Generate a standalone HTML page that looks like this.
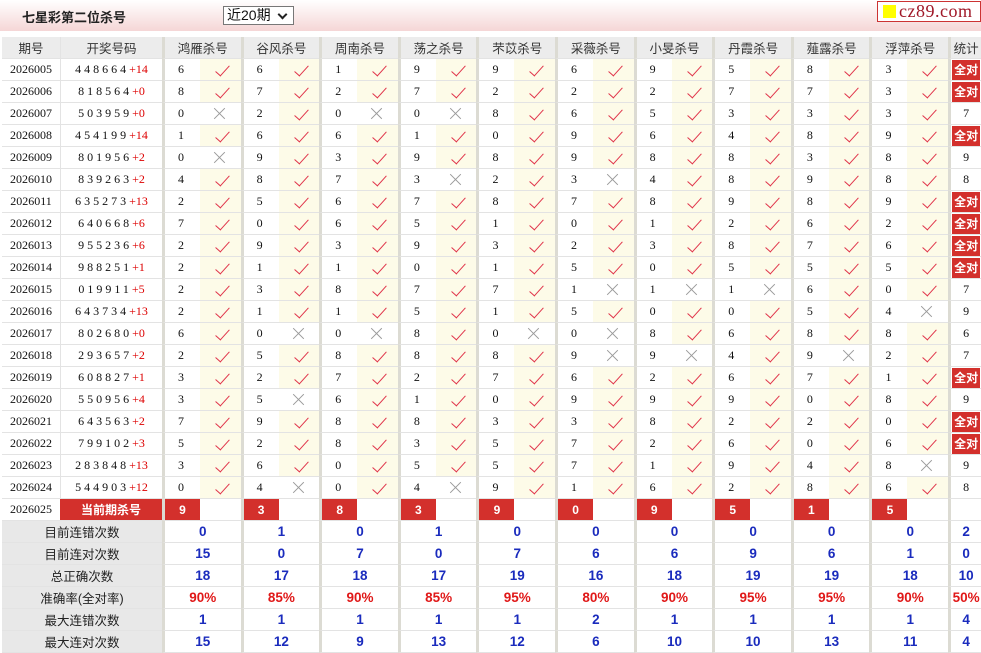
<!DOCTYPE html><html><head><meta charset="utf-8"><style>
*{margin:0;padding:0;box-sizing:border-box}
body{width:981px;height:652px;overflow:hidden;background:#fff;font-family:"Liberation Sans","Noto Sans CJK SC",sans-serif;position:relative}
.top{position:absolute;left:0;top:0;width:981px;height:31px;background:linear-gradient(#fff,#f5d6d6)}
.title{position:absolute;left:22px;top:7px;font-size:13px;font-weight:bold;color:#222}
.sel{position:absolute;left:223px;top:6px;width:71px;height:19px;border:1px solid #777;background:#fff;font-size:14px;padding-left:3px;line-height:17px;color:#111}
.sel:after{content:"";position:absolute;right:7px;top:4px;width:5px;height:5px;border-right:2px solid #222;border-bottom:2px solid #222;transform:rotate(45deg)}
.logo{position:absolute;left:877px;top:1px;width:104px;height:21px;border:1px solid #c33;background:#fff;font-family:"Liberation Serif",serif;font-size:18px;color:#a01828;line-height:18px;padding-left:21px;letter-spacing:.5px}
.logo:before{content:"";position:absolute;left:5px;top:3px;width:13px;height:13px;background:#ff0}
table{position:absolute;left:2px;top:37px;border-collapse:separate;border-spacing:0;table-layout:fixed;width:979px}
td{height:22px;border-bottom:1px solid #e3e3e3;font-size:12px;padding:0;text-align:center;font-family:"Liberation Serif","Noto Serif CJK SC",serif;color:#111;position:relative}
tr.h td{background:#ececec;font-family:"Liberation Sans","Noto Sans CJK SC",sans-serif;font-size:12.5px;color:#333}
td.n{border-left:3px solid #dcdbd3;text-align:left;padding-left:13px}
td.g{border-left:3px solid #dcdbd3}
td.y{background:#fdfbe8}
td.y:after{content:"";position:absolute;left:19px;top:3px;width:6px;height:13px;border-right:1.6px solid #e0344a;border-bottom:1.6px solid #e0344a;transform:rotate(42deg)}
td.x:before,td.x:after{content:"";position:absolute;left:12px;top:10px;width:15px;height:1px;background:#999;transform:rotate(45deg)}
td.x:after{transform:rotate(-45deg)}
td.q{border-left:1px solid #e3e3e3}
td.s{border-left:3px solid #dcdbd3}
td.s b{display:block;background:#d3302c;color:#fff;font-family:"Liberation Sans","Noto Sans CJK SC",sans-serif;font-size:12px;height:20px;line-height:20px;margin:0 1px}
td.k{font-family:"Liberation Serif",serif}
td.r{background:#d3302c;color:#fff;font-weight:bold;text-align:center;border-left:3px solid #dcdbd3;font-family:"Liberation Sans","Noto Sans CJK SC",sans-serif}
td.c{background:#d3302c;color:#fff;font-weight:bold;font-family:"Liberation Sans","Noto Sans CJK SC",sans-serif;font-size:12px}
td.j{letter-spacing:3px}
td.j i{font-style:normal;color:#d00;letter-spacing:0}
tr.t td{font-family:"Liberation Sans",sans-serif;font-weight:bold;font-size:13.5px;color:#1a2bbd}
tr.t td.l{background:#e8e8e8;font-family:"Liberation Sans","Noto Sans CJK SC",sans-serif;font-weight:normal;font-size:12.5px;color:#222}
tr.p td{color:#e01818}
tr.t td.m{border-left:3px solid #dcdbd3}
</style></head><body>
<div class="top"></div>
<div class="title">七星彩第二位杀号</div>
<div class="sel">近20期</div>
<div class="logo">cz89.com</div>
<table>
<colgroup><col style="width:58px"><col style="width:102px">
<col style="width:38px"><col style="width:40.6px"><col style="width:38px"><col style="width:40.6px"><col style="width:38px"><col style="width:40.6px"><col style="width:38px"><col style="width:40.6px"><col style="width:38px"><col style="width:40.6px"><col style="width:38px"><col style="width:40.6px"><col style="width:38px"><col style="width:40.6px"><col style="width:38px"><col style="width:40.6px"><col style="width:38px"><col style="width:40.6px"><col style="width:38px"><col style="width:40.6px"><col style="width:33px"></colgroup>
<tr class="h"><td>期号</td><td class="q">开奖号码</td><td colspan="2" class="g">鸿雁杀号</td><td colspan="2" class="g">谷风杀号</td><td colspan="2" class="g">周南杀号</td><td colspan="2" class="g">荡之杀号</td><td colspan="2" class="g">芣苡杀号</td><td colspan="2" class="g">采薇杀号</td><td colspan="2" class="g">小旻杀号</td><td colspan="2" class="g">丹霞杀号</td><td colspan="2" class="g">薤露杀号</td><td colspan="2" class="g">浮萍杀号</td><td class="g">统计</td></tr>
<tr><td>2026005</td><td class="j q">448664<i>+14</i></td><td class="n">6</td><td class="y"></td><td class="n">6</td><td class="y"></td><td class="n">1</td><td class="y"></td><td class="n">9</td><td class="y"></td><td class="n">9</td><td class="y"></td><td class="n">6</td><td class="y"></td><td class="n">9</td><td class="y"></td><td class="n">5</td><td class="y"></td><td class="n">8</td><td class="y"></td><td class="n">3</td><td class="y"></td><td class="s"><b>全对</b></td></tr>
<tr><td>2026006</td><td class="j q">818564<i>+0</i></td><td class="n">8</td><td class="y"></td><td class="n">7</td><td class="y"></td><td class="n">2</td><td class="y"></td><td class="n">7</td><td class="y"></td><td class="n">2</td><td class="y"></td><td class="n">2</td><td class="y"></td><td class="n">2</td><td class="y"></td><td class="n">7</td><td class="y"></td><td class="n">7</td><td class="y"></td><td class="n">3</td><td class="y"></td><td class="s"><b>全对</b></td></tr>
<tr><td>2026007</td><td class="j q">503959<i>+0</i></td><td class="n">0</td><td class="x"></td><td class="n">2</td><td class="y"></td><td class="n">0</td><td class="x"></td><td class="n">0</td><td class="x"></td><td class="n">8</td><td class="y"></td><td class="n">6</td><td class="y"></td><td class="n">5</td><td class="y"></td><td class="n">3</td><td class="y"></td><td class="n">3</td><td class="y"></td><td class="n">3</td><td class="y"></td><td class="s k">7</td></tr>
<tr><td>2026008</td><td class="j q">454199<i>+14</i></td><td class="n">1</td><td class="y"></td><td class="n">6</td><td class="y"></td><td class="n">6</td><td class="y"></td><td class="n">1</td><td class="y"></td><td class="n">0</td><td class="y"></td><td class="n">9</td><td class="y"></td><td class="n">6</td><td class="y"></td><td class="n">4</td><td class="y"></td><td class="n">8</td><td class="y"></td><td class="n">9</td><td class="y"></td><td class="s"><b>全对</b></td></tr>
<tr><td>2026009</td><td class="j q">801956<i>+2</i></td><td class="n">0</td><td class="x"></td><td class="n">9</td><td class="y"></td><td class="n">3</td><td class="y"></td><td class="n">9</td><td class="y"></td><td class="n">8</td><td class="y"></td><td class="n">9</td><td class="y"></td><td class="n">8</td><td class="y"></td><td class="n">8</td><td class="y"></td><td class="n">3</td><td class="y"></td><td class="n">8</td><td class="y"></td><td class="s k">9</td></tr>
<tr><td>2026010</td><td class="j q">839263<i>+2</i></td><td class="n">4</td><td class="y"></td><td class="n">8</td><td class="y"></td><td class="n">7</td><td class="y"></td><td class="n">3</td><td class="x"></td><td class="n">2</td><td class="y"></td><td class="n">3</td><td class="x"></td><td class="n">4</td><td class="y"></td><td class="n">8</td><td class="y"></td><td class="n">9</td><td class="y"></td><td class="n">8</td><td class="y"></td><td class="s k">8</td></tr>
<tr><td>2026011</td><td class="j q">635273<i>+13</i></td><td class="n">2</td><td class="y"></td><td class="n">5</td><td class="y"></td><td class="n">6</td><td class="y"></td><td class="n">7</td><td class="y"></td><td class="n">8</td><td class="y"></td><td class="n">7</td><td class="y"></td><td class="n">8</td><td class="y"></td><td class="n">9</td><td class="y"></td><td class="n">8</td><td class="y"></td><td class="n">9</td><td class="y"></td><td class="s"><b>全对</b></td></tr>
<tr><td>2026012</td><td class="j q">640668<i>+6</i></td><td class="n">7</td><td class="y"></td><td class="n">0</td><td class="y"></td><td class="n">6</td><td class="y"></td><td class="n">5</td><td class="y"></td><td class="n">1</td><td class="y"></td><td class="n">0</td><td class="y"></td><td class="n">1</td><td class="y"></td><td class="n">2</td><td class="y"></td><td class="n">6</td><td class="y"></td><td class="n">2</td><td class="y"></td><td class="s"><b>全对</b></td></tr>
<tr><td>2026013</td><td class="j q">955236<i>+6</i></td><td class="n">2</td><td class="y"></td><td class="n">9</td><td class="y"></td><td class="n">3</td><td class="y"></td><td class="n">9</td><td class="y"></td><td class="n">3</td><td class="y"></td><td class="n">2</td><td class="y"></td><td class="n">3</td><td class="y"></td><td class="n">8</td><td class="y"></td><td class="n">7</td><td class="y"></td><td class="n">6</td><td class="y"></td><td class="s"><b>全对</b></td></tr>
<tr><td>2026014</td><td class="j q">988251<i>+1</i></td><td class="n">2</td><td class="y"></td><td class="n">1</td><td class="y"></td><td class="n">1</td><td class="y"></td><td class="n">0</td><td class="y"></td><td class="n">1</td><td class="y"></td><td class="n">5</td><td class="y"></td><td class="n">0</td><td class="y"></td><td class="n">5</td><td class="y"></td><td class="n">5</td><td class="y"></td><td class="n">5</td><td class="y"></td><td class="s"><b>全对</b></td></tr>
<tr><td>2026015</td><td class="j q">019911<i>+5</i></td><td class="n">2</td><td class="y"></td><td class="n">3</td><td class="y"></td><td class="n">8</td><td class="y"></td><td class="n">7</td><td class="y"></td><td class="n">7</td><td class="y"></td><td class="n">1</td><td class="x"></td><td class="n">1</td><td class="x"></td><td class="n">1</td><td class="x"></td><td class="n">6</td><td class="y"></td><td class="n">0</td><td class="y"></td><td class="s k">7</td></tr>
<tr><td>2026016</td><td class="j q">643734<i>+13</i></td><td class="n">2</td><td class="y"></td><td class="n">1</td><td class="y"></td><td class="n">1</td><td class="y"></td><td class="n">5</td><td class="y"></td><td class="n">1</td><td class="y"></td><td class="n">5</td><td class="y"></td><td class="n">0</td><td class="y"></td><td class="n">0</td><td class="y"></td><td class="n">5</td><td class="y"></td><td class="n">4</td><td class="x"></td><td class="s k">9</td></tr>
<tr><td>2026017</td><td class="j q">802680<i>+0</i></td><td class="n">6</td><td class="y"></td><td class="n">0</td><td class="x"></td><td class="n">0</td><td class="x"></td><td class="n">8</td><td class="y"></td><td class="n">0</td><td class="x"></td><td class="n">0</td><td class="x"></td><td class="n">8</td><td class="y"></td><td class="n">6</td><td class="y"></td><td class="n">8</td><td class="y"></td><td class="n">8</td><td class="y"></td><td class="s k">6</td></tr>
<tr><td>2026018</td><td class="j q">293657<i>+2</i></td><td class="n">2</td><td class="y"></td><td class="n">5</td><td class="y"></td><td class="n">8</td><td class="y"></td><td class="n">8</td><td class="y"></td><td class="n">8</td><td class="y"></td><td class="n">9</td><td class="x"></td><td class="n">9</td><td class="x"></td><td class="n">4</td><td class="y"></td><td class="n">9</td><td class="x"></td><td class="n">2</td><td class="y"></td><td class="s k">7</td></tr>
<tr><td>2026019</td><td class="j q">608827<i>+1</i></td><td class="n">3</td><td class="y"></td><td class="n">2</td><td class="y"></td><td class="n">7</td><td class="y"></td><td class="n">2</td><td class="y"></td><td class="n">7</td><td class="y"></td><td class="n">6</td><td class="y"></td><td class="n">2</td><td class="y"></td><td class="n">6</td><td class="y"></td><td class="n">7</td><td class="y"></td><td class="n">1</td><td class="y"></td><td class="s"><b>全对</b></td></tr>
<tr><td>2026020</td><td class="j q">550956<i>+4</i></td><td class="n">3</td><td class="y"></td><td class="n">5</td><td class="x"></td><td class="n">6</td><td class="y"></td><td class="n">1</td><td class="y"></td><td class="n">0</td><td class="y"></td><td class="n">9</td><td class="y"></td><td class="n">9</td><td class="y"></td><td class="n">9</td><td class="y"></td><td class="n">0</td><td class="y"></td><td class="n">8</td><td class="y"></td><td class="s k">9</td></tr>
<tr><td>2026021</td><td class="j q">643563<i>+2</i></td><td class="n">7</td><td class="y"></td><td class="n">9</td><td class="y"></td><td class="n">8</td><td class="y"></td><td class="n">8</td><td class="y"></td><td class="n">3</td><td class="y"></td><td class="n">3</td><td class="y"></td><td class="n">8</td><td class="y"></td><td class="n">2</td><td class="y"></td><td class="n">2</td><td class="y"></td><td class="n">0</td><td class="y"></td><td class="s"><b>全对</b></td></tr>
<tr><td>2026022</td><td class="j q">799102<i>+3</i></td><td class="n">5</td><td class="y"></td><td class="n">2</td><td class="y"></td><td class="n">8</td><td class="y"></td><td class="n">3</td><td class="y"></td><td class="n">5</td><td class="y"></td><td class="n">7</td><td class="y"></td><td class="n">2</td><td class="y"></td><td class="n">6</td><td class="y"></td><td class="n">0</td><td class="y"></td><td class="n">6</td><td class="y"></td><td class="s"><b>全对</b></td></tr>
<tr><td>2026023</td><td class="j q">283848<i>+13</i></td><td class="n">3</td><td class="y"></td><td class="n">6</td><td class="y"></td><td class="n">0</td><td class="y"></td><td class="n">5</td><td class="y"></td><td class="n">5</td><td class="y"></td><td class="n">7</td><td class="y"></td><td class="n">1</td><td class="y"></td><td class="n">9</td><td class="y"></td><td class="n">4</td><td class="y"></td><td class="n">8</td><td class="x"></td><td class="s k">9</td></tr>
<tr><td>2026024</td><td class="j q">544903<i>+12</i></td><td class="n">0</td><td class="y"></td><td class="n">4</td><td class="x"></td><td class="n">0</td><td class="y"></td><td class="n">4</td><td class="x"></td><td class="n">9</td><td class="y"></td><td class="n">1</td><td class="y"></td><td class="n">6</td><td class="y"></td><td class="n">2</td><td class="y"></td><td class="n">8</td><td class="y"></td><td class="n">6</td><td class="y"></td><td class="s k">8</td></tr>
<tr><td>2026025</td><td class="c">当前期杀号</td><td class="r">9</td><td></td><td class="r">3</td><td></td><td class="r">8</td><td></td><td class="r">3</td><td></td><td class="r">9</td><td></td><td class="r">0</td><td></td><td class="r">9</td><td></td><td class="r">5</td><td></td><td class="r">1</td><td></td><td class="r">5</td><td></td><td class="s"></td></tr>
<tr class="t"><td colspan="2" class="l">目前连错次数</td><td colspan="2" class="m">0</td><td colspan="2" class="m">1</td><td colspan="2" class="m">0</td><td colspan="2" class="m">1</td><td colspan="2" class="m">0</td><td colspan="2" class="m">0</td><td colspan="2" class="m">0</td><td colspan="2" class="m">0</td><td colspan="2" class="m">0</td><td colspan="2" class="m">0</td><td class="m">2</td></tr>
<tr class="t"><td colspan="2" class="l">目前连对次数</td><td colspan="2" class="m">15</td><td colspan="2" class="m">0</td><td colspan="2" class="m">7</td><td colspan="2" class="m">0</td><td colspan="2" class="m">7</td><td colspan="2" class="m">6</td><td colspan="2" class="m">6</td><td colspan="2" class="m">9</td><td colspan="2" class="m">6</td><td colspan="2" class="m">1</td><td class="m">0</td></tr>
<tr class="t"><td colspan="2" class="l">总正确次数</td><td colspan="2" class="m">18</td><td colspan="2" class="m">17</td><td colspan="2" class="m">18</td><td colspan="2" class="m">17</td><td colspan="2" class="m">19</td><td colspan="2" class="m">16</td><td colspan="2" class="m">18</td><td colspan="2" class="m">19</td><td colspan="2" class="m">19</td><td colspan="2" class="m">18</td><td class="m">10</td></tr>
<tr class="t p"><td colspan="2" class="l">准确率(全对率)</td><td colspan="2" class="m">90%</td><td colspan="2" class="m">85%</td><td colspan="2" class="m">90%</td><td colspan="2" class="m">85%</td><td colspan="2" class="m">95%</td><td colspan="2" class="m">80%</td><td colspan="2" class="m">90%</td><td colspan="2" class="m">95%</td><td colspan="2" class="m">95%</td><td colspan="2" class="m">90%</td><td class="m">50%</td></tr>
<tr class="t"><td colspan="2" class="l">最大连错次数</td><td colspan="2" class="m">1</td><td colspan="2" class="m">1</td><td colspan="2" class="m">1</td><td colspan="2" class="m">1</td><td colspan="2" class="m">1</td><td colspan="2" class="m">2</td><td colspan="2" class="m">1</td><td colspan="2" class="m">1</td><td colspan="2" class="m">1</td><td colspan="2" class="m">1</td><td class="m">4</td></tr>
<tr class="t"><td colspan="2" class="l">最大连对次数</td><td colspan="2" class="m">15</td><td colspan="2" class="m">12</td><td colspan="2" class="m">9</td><td colspan="2" class="m">13</td><td colspan="2" class="m">12</td><td colspan="2" class="m">6</td><td colspan="2" class="m">10</td><td colspan="2" class="m">10</td><td colspan="2" class="m">13</td><td colspan="2" class="m">11</td><td class="m">4</td></tr>
</table>
</body></html>
